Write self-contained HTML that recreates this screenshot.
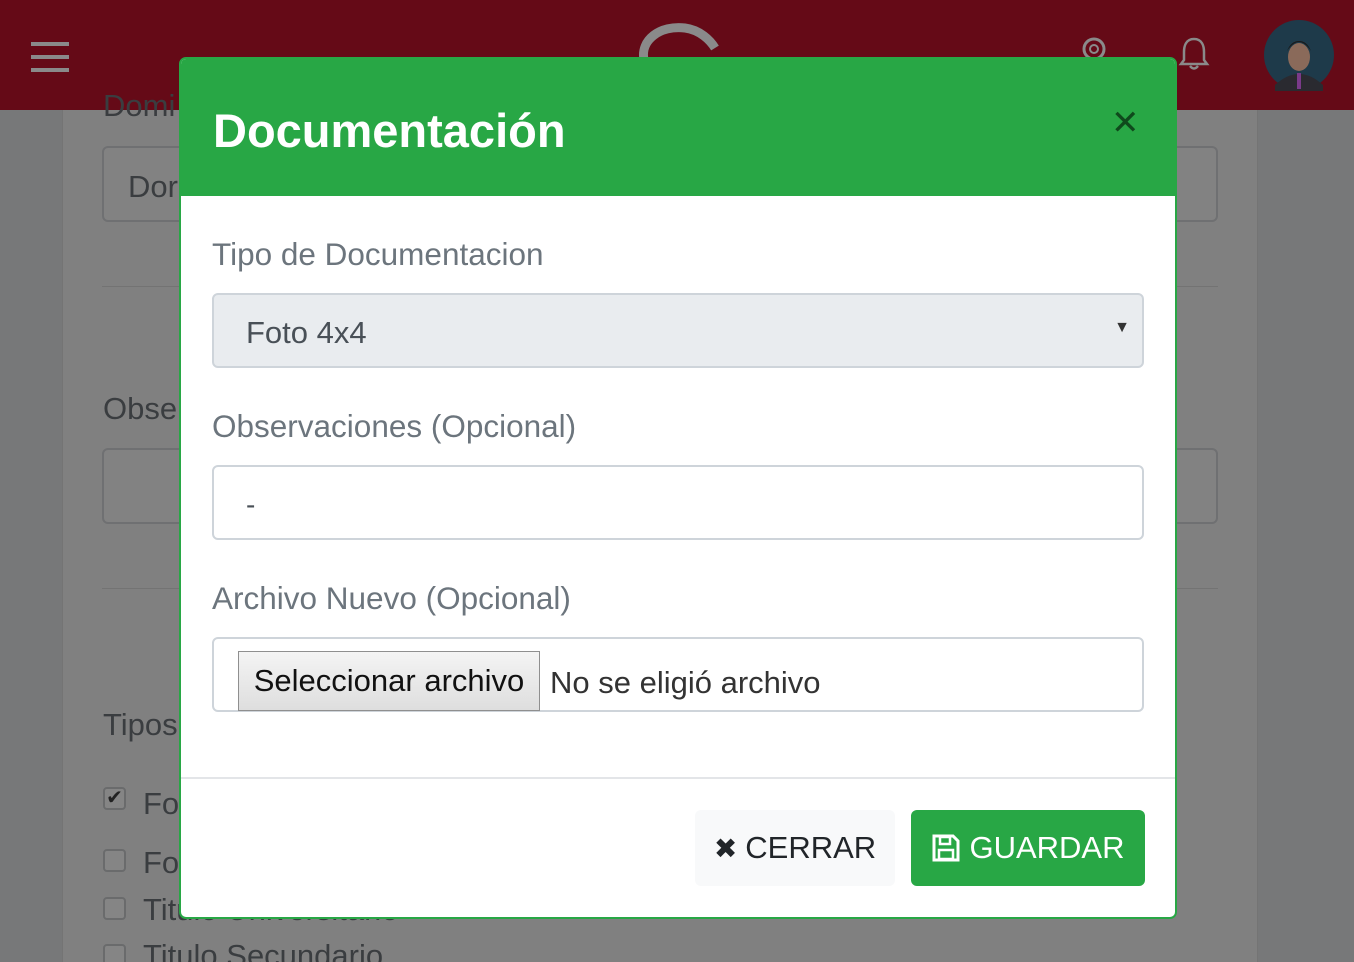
<!DOCTYPE html>
<html><head><meta charset="utf-8">
<style>
*{box-sizing:border-box;margin:0;padding:0}
html,body{width:1354px;height:962px;overflow:hidden}
body{background:#777879;font-family:"Liberation Sans",sans-serif;position:relative}
.top{position:absolute;left:0;top:0;width:1354px;height:110px;background:#650a17}
.card{position:absolute;left:62px;top:110px;width:1196px;height:852px;background:#808080;border-left:1px solid #747474;border-right:1px solid #747474}
.bgin{position:absolute;border:2px solid #6f7072;border-radius:6px;background:#828282}
.bgtxt{position:absolute;color:#3a3d40;font-size:31px}
.hr{position:absolute;left:102px;width:1116px;height:1px;background:#737373}
.cb{position:absolute;left:103px;width:23px;height:23px;border:2px solid #6a6b6c;border-radius:4px;background:#858585}
.modal{position:absolute;left:179px;top:57px;width:998px;height:862px;background:#fff;border:2px solid #28a745;border-radius:7px;overflow:hidden}
.mh{height:137px;background:#28a745;position:relative}
.mh h1{position:absolute;left:32px;top:44px;color:#fff;font-size:47px;font-weight:bold}
.x{position:absolute;left:930px;top:44px;color:#0f4a1c;font-size:34px}
.lbl{position:absolute;left:31px;color:#6c757d;font-size:31.5px}
.fld{position:absolute;left:31px;width:932px;height:75px;border:2px solid #ced4da;border-radius:6px}
.btn{position:absolute;top:751px;height:76px;border-radius:6px;font-size:31px;display:flex;align-items:center;justify-content:center}
</style></head><body>
<div class="top">
  <div style="position:absolute;left:31px;top:42px;width:38px;height:4px;background:#8a8a8a;box-shadow:0 13px 0 #8a8a8a,0 26px 0 #8a8a8a"></div>
  <svg style="position:absolute;left:630px;top:20px" width="100" height="40"><path d="M14 40 C10 20 30 5 55 8 C70 10 80 20 85 28" stroke="#8a8a8a" stroke-width="9" fill="none"/></svg>
  <svg style="position:absolute;left:1080px;top:36px" width="30" height="24"><circle cx="14" cy="13" r="10" stroke="#8a8a8a" stroke-width="3" fill="none"/><circle cx="14" cy="13" r="4" stroke="#8a8a8a" stroke-width="2" fill="none"/></svg>
  <svg style="position:absolute;left:1178px;top:36px" width="32" height="36"><path d="M16 3 C8 3 6 10 6 16 L6 24 L3 28 L29 28 L26 24 L26 16 C26 10 24 3 16 3 Z M12 30 Q16 35 20 30" stroke="#8a8a8a" stroke-width="2.5" fill="none"/></svg>
  <svg style="position:absolute;left:1263px;top:19px" width="72" height="72"><circle cx="36" cy="36" r="35" fill="#1e3a4a"/><ellipse cx="36" cy="38" rx="11" ry="14" fill="#8a6a5a"/><path d="M24 32 Q36 14 48 32 Q44 22 36 22 Q28 22 24 32Z" fill="#1a1a1a"/><path d="M12 66 Q36 44 60 66 L60 72 L12 72Z" fill="#2a2a30"/><rect x="34" y="54" width="4" height="16" fill="#7a3a8a"/></svg>
</div>
<div class="card"></div>
<div class="bgtxt" style="left:103px;top:88px">Domi</div>
<div class="bgin" style="left:102px;top:146px;width:1116px;height:76px"></div>
<div class="bgtxt" style="left:128px;top:169px">Dor</div>
<div class="hr" style="top:286px"></div>
<div class="bgtxt" style="left:103px;top:391px">Obse</div>
<div class="bgin" style="left:102px;top:448px;width:1116px;height:76px"></div>
<div class="hr" style="top:588px"></div>
<div class="bgtxt" style="left:103px;top:707px">Tipos</div>
<div class="cb" style="top:787px;color:#222;font-size:20px;line-height:18px;text-align:center">✔</div><div class="bgtxt" style="left:143px;top:786px">Fo</div>
<div class="cb" style="top:849px"></div><div class="bgtxt" style="left:143px;top:845px">Fo</div>
<div class="cb" style="top:897px"></div><div class="bgtxt" style="left:143px;top:892px">Titulo Universitario</div>
<div class="cb" style="top:944px"></div><div class="bgtxt" style="left:143px;top:938px">Titulo Secundario</div>

<div class="modal">
  <div class="mh"><h1>Documentación</h1><div class="x">✕</div></div>
  <div class="lbl" style="top:177px">Tipo de Documentacion</div>
  <div class="fld" style="top:234px;background:#e9ecef"><span style="position:absolute;left:32px;top:20px;font-size:31px;color:#495057">Foto 4x4</span><span style="position:absolute;right:12px;top:24px;font-size:16px;color:#333">▼</span></div>
  <div class="lbl" style="top:349px">Observaciones (Opcional)</div>
  <div class="fld" style="top:406px"><span style="position:absolute;left:32px;top:22px;font-size:28px;color:#495057">-</span></div>
  <div class="lbl" style="top:521px">Archivo Nuevo (Opcional)</div>
  <div class="fld" style="top:578px">
    <div style="position:absolute;left:24px;top:12px;width:302px;height:60px;border:1px solid #8f8f8f;background:linear-gradient(#f4f4f4,#dedede);font-size:31px;color:#111;text-align:center;line-height:58px">Seleccionar archivo</div>
    <span style="position:absolute;left:336px;top:26px;font-size:31px;color:#333">No se eligió archivo</span>
  </div>
  <div style="position:absolute;left:0;top:718px;width:100%;height:2px;background:#e3e5e8"></div>
  <div class="btn" style="left:514px;width:200px;background:#f8f9fa;color:#212529"><span style="font-size:28px;margin-right:8px">✖</span>CERRAR</div>
  <div class="btn" style="left:730px;width:234px;background:#28a745;color:#fff">
    <svg width="30" height="30" viewBox="0 0 30 30" style="margin-right:8px"><path d="M3 3 H22 L27 8 V27 H3 Z" fill="none" stroke="#fff" stroke-width="3"/><rect x="9" y="4" width="10" height="7" fill="none" stroke="#fff" stroke-width="2.5"/><rect x="8" y="17" width="14" height="9" fill="none" stroke="#fff" stroke-width="2.5"/></svg>GUARDAR</div>
</div>
</body></html>
